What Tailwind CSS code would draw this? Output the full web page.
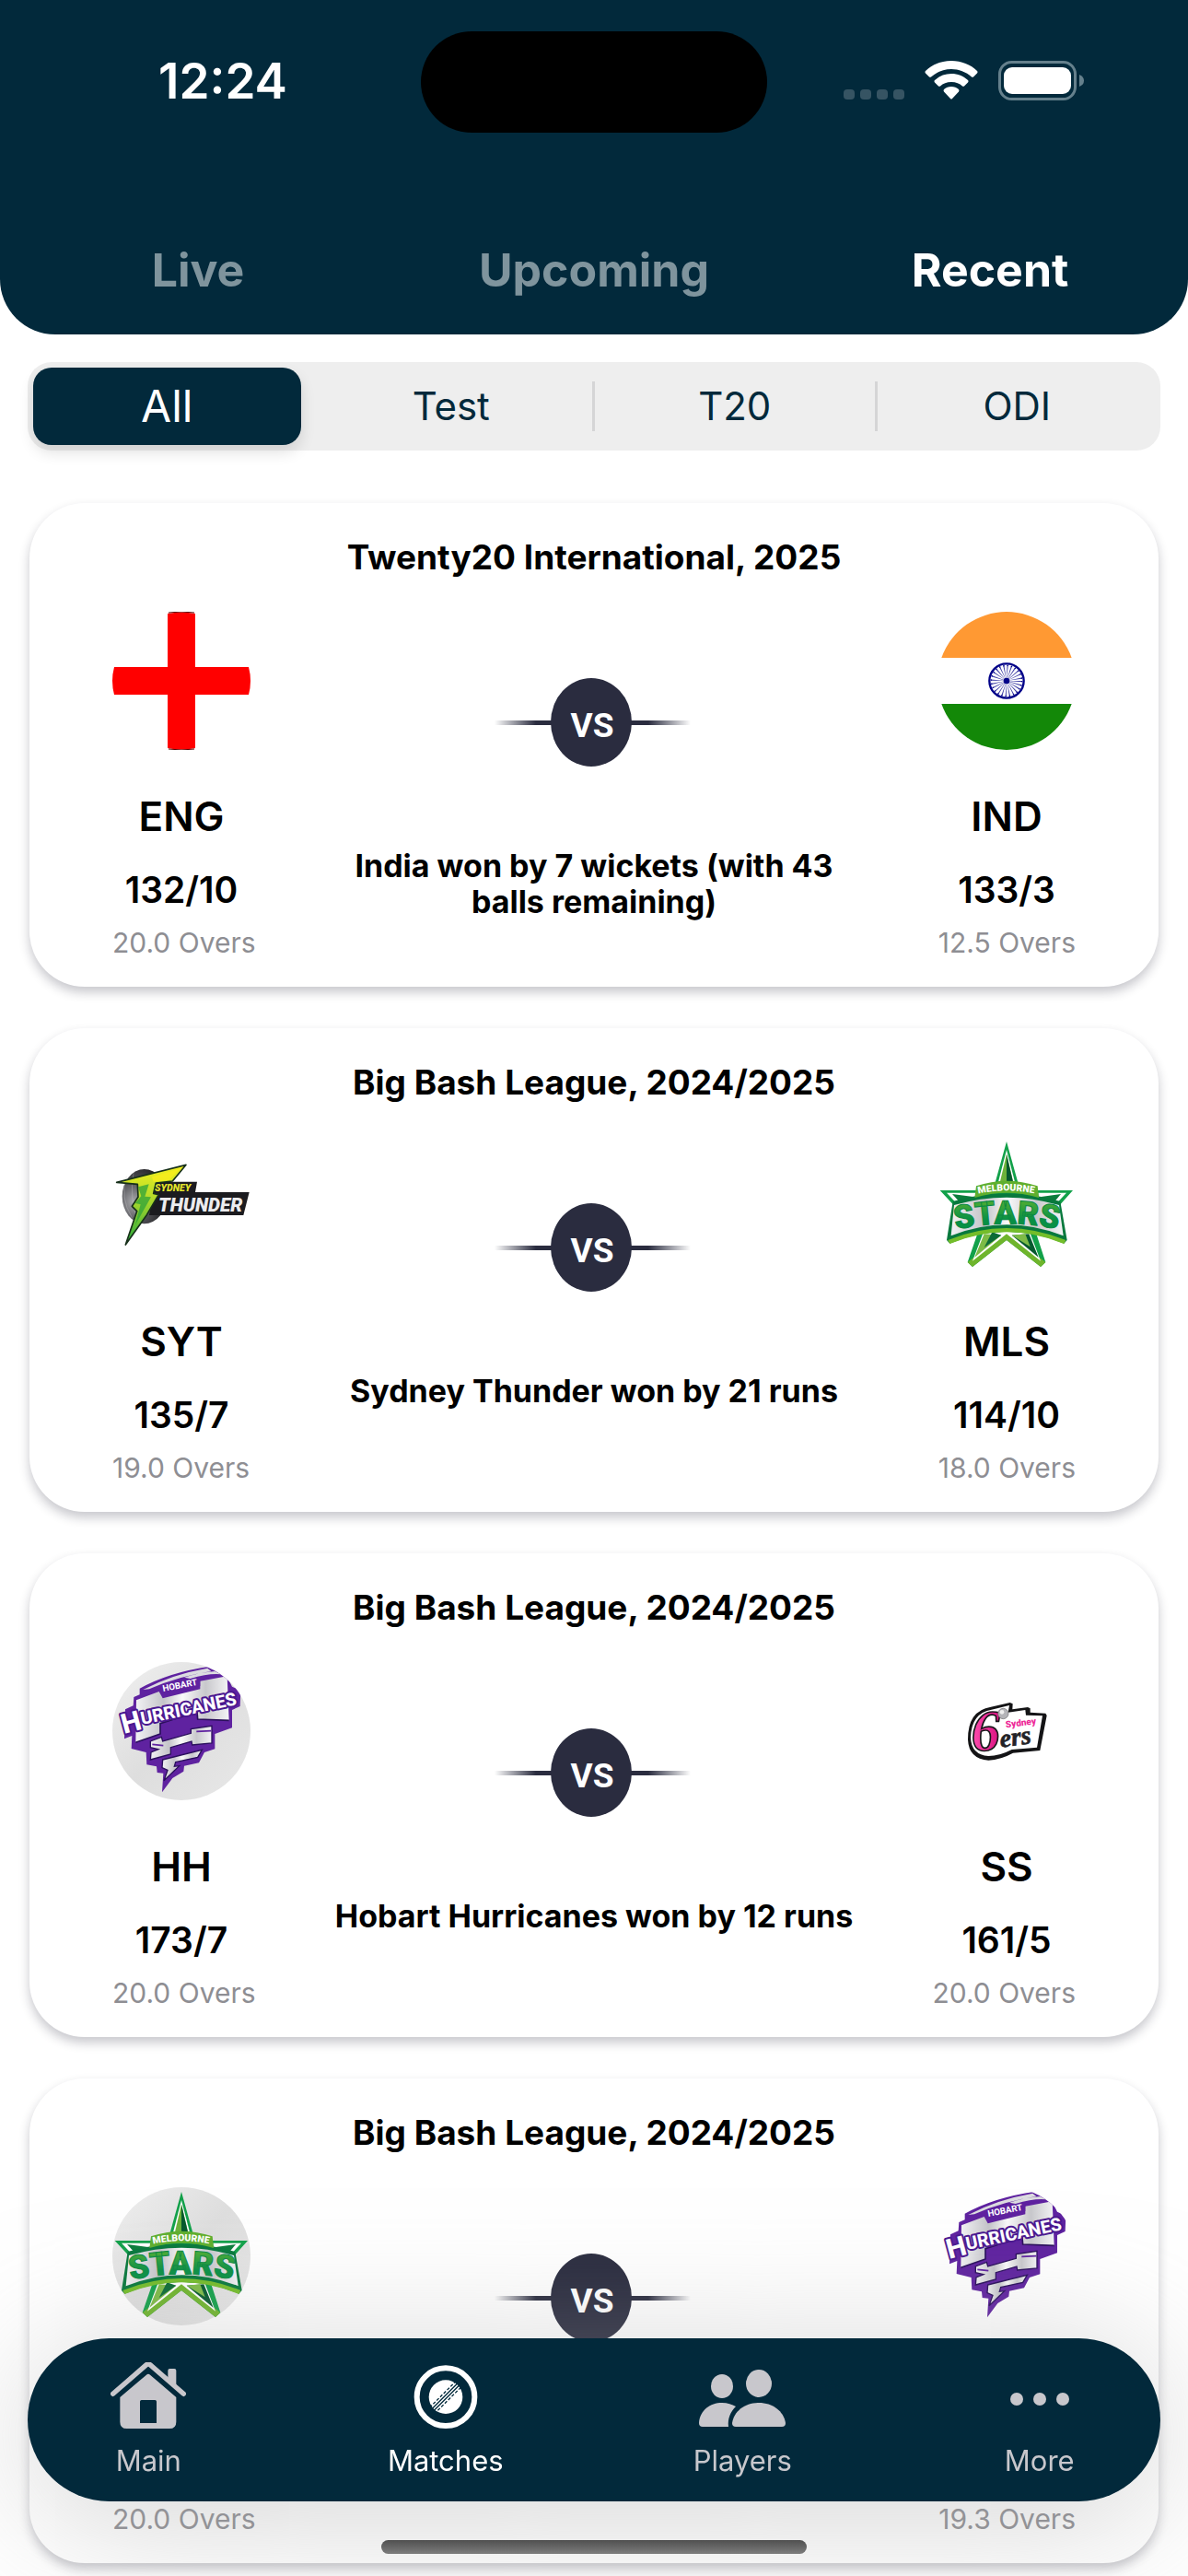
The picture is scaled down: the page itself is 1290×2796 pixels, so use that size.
<!DOCTYPE html>
<html lang="en">
<head>
<meta charset="utf-8">
<meta name="viewport" content="width=device-width, initial-scale=1">
<title>Matches</title>
<script src="https://cdn.jsdelivr.net/npm/@tailwindcss/browser@4"></script>
</head>
<body class="min-h-screen bg-white font-['Inter','Roboto',sans-serif] text-black">

<!-- Shared gradients and paths -->
<svg class="absolute size-0" aria-hidden="true">
  <defs>
    <linearGradient id="fadeL"><stop offset="0" stop-color="#2a2c3f" stop-opacity="0"/><stop offset=".7" stop-color="#2a2c3f"/></linearGradient>
    <linearGradient id="fadeR"><stop offset=".3" stop-color="#2a2c3f"/><stop offset="1" stop-color="#2a2c3f" stop-opacity="0"/></linearGradient>
    <linearGradient id="plate" x1="0" y1="0" x2="1" y2="1"><stop offset="0" stop-color="#f0f0f0"/><stop offset=".5" stop-color="#dedede"/><stop offset="1" stop-color="#e8e8e8"/></linearGradient>
    <linearGradient id="silver"><stop offset="0" stop-color="#f2f2f4"/><stop offset=".3" stop-color="#c4c4c9"/><stop offset=".5" stop-color="#fafafa"/><stop offset=".75" stop-color="#c8c8cc"/><stop offset="1" stop-color="#f4f4f6"/></linearGradient>
    <linearGradient id="green" x1="0" y1="0" x2="0" y2="1"><stop offset="0" stop-color="#6cb82c"/><stop offset=".6" stop-color="#089045"/></linearGradient>
    <linearGradient id="bolt" x1="0" y1="0" x2="0" y2="1"><stop offset="0" stop-color="#f4f01e"/><stop offset=".4" stop-color="#b5dc2a"/><stop offset="1" stop-color="#22a83c"/></linearGradient>
    <radialGradient id="ball" cx=".25" cy=".6" r=".8"><stop offset="0" stop-color="#a8a8ac"/><stop offset=".45" stop-color="#55555a"/><stop offset="1" stop-color="#18181b"/></radialGradient>
    <linearGradient id="pink" x1="0" y1="0" x2="1" y2="0"><stop offset="0" stop-color="#ff4fb0"/><stop offset="1" stop-color="#d8107f"/></linearGradient>
    <clipPath id="hurClip"><circle cx="291" cy="297" r="225"/></clipPath>
    <path id="starsArc" d="M114 344Q279 306 450 344"/>
    <path id="melbArc" d="M187 227Q279 207 374 227"/>
  </defs>
</svg>

<header class="rounded-b-[60px] bg-[#02293b]">
  <div class="relative flex h-[174px] justify-between px-[112px] pt-[62px] text-white">
    <time class="w-[260px] text-center text-[53px] leading-[52px] font-semibold">12:24</time>
    <div class="absolute top-[34px] left-1/2 h-[110px] w-[376px] -translate-x-1/2 rounded-full bg-black"></div>
    <div class="flex h-[50px] items-center gap-[22px]">
      <svg class="h-[44px] w-[66px]" viewBox="0 0 66 44" fill="#365463" aria-label="No signal" role="img"><rect y="32" width="12" height="11" rx="4"/><rect x="18" y="32" width="12" height="11" rx="4"/><rect x="36" y="32" width="12" height="11" rx="4"/><rect x="54" y="32" width="12" height="11" rx="4"/></svg>
      <svg class="h-[42px] w-[58px]" viewBox="0 0 58 42" fill="#fff" aria-label="Wi-Fi" role="img">
        <path d="M29 0C40 0 50 4 57 11Q58 12 57 13.500L53 17.500Q52 18 51 17.500C45 12 37 9 29 9S13 12 7 17.500Q6 18 5 17.500L1 13.500Q0 12 1 11C8 4 18 0 29 0Z"/>
        <path d="M29 14C36 14 42 16.500 47 21Q48 22 47 23.500L43 27.500Q42 28 41 27.500C38 24.500 34 23 29 23S20 24.500 17 27.500Q16 28 15 27.500L11 23.500Q10 22 11 21C16 16.500 22 14 29 14Z"/>
        <path d="M29 28C32 28 35 29 37 31Q38 32 37 33.500L30 41Q29 42 28 41L21 33.500Q20 32 21 31C23 29 26 28 29 28Z"/>
      </svg>
      <svg class="h-[43px] w-[94px]" viewBox="0 0 94 43" aria-label="Battery full" role="img"><rect x="1.500" y="1.500" width="82" height="40" rx="13" fill="none" stroke="#65808c" stroke-width="3"/><rect x="6" y="7" width="73" height="29" rx="9" fill="#fff"/><path d="M88 15Q93 17 93 21.500T88 28Z" fill="#65808c"/></svg>
    </div>
  </div>
  <nav class="grid grid-cols-3 pt-[85px] pb-[36px] text-[50px] leading-[68px] font-bold text-[#7f949d]" aria-label="Match lists">
    <button type="button">Live</button>
    <button type="button">Upcoming</button>
    <button type="button" class="text-white" aria-current="page">Recent</button>
  </nav>
</header>

<main class="px-[30px] pt-[30px] pb-[12px]">
  <div class="grid h-24 grid-cols-4 items-center rounded-[26px] bg-[#eee] pr-1 text-[42px] leading-[54px] text-[#02293b]" role="group" aria-label="Format">
    <button type="button" aria-pressed="true" class="mr-[10px] ml-[6px] h-[84px] rounded-[20px] bg-[#02293b] text-[48px] text-white shadow-[0_8px_16px_rgba(0,0,0,0.12)]">All</button>
    <button type="button">Test</button>
    <button type="button" class="border-l-3 border-[#d5d5d6]">T20</button>
    <button type="button" class="border-l-3 border-[#d5d5d6]">ODI</button>
  </div>

  <div class="mx-[2px] mt-[57px] flex flex-col gap-[45px]">

    <article class="rounded-[60px] bg-white px-[90px] pt-[37px] pb-[30px] shadow-[0_6px_12px_rgba(20,20,40,0.24)]">
      <h2 class="text-center text-[37px] leading-[44px] font-bold">Twenty20 International, 2025</h2>
      <div class="mt-[37px] flex justify-between">
        <div class="flex w-[150px] flex-col">
          <svg class="size-[150px]" viewBox="0 0 150 150" role="img" aria-label="England">
            <path d="M60 2Q75-1 90 2V60H148Q152 75 148 90H90V148Q75 151 60 148V90H2Q-2 75 2 60H60Z" fill="#f00"/>
            <path d="M61 1Q75-1 89 1M61 149Q75 151 89 149" fill="none" stroke="#500" stroke-width="1"/>
          </svg>
          <h3 class="mt-[46px] text-center text-[44px] leading-[52px] font-semibold">ENG</h3>
          <p class="mt-8 text-center text-[39px] leading-[44px] font-semibold">132/10</p>
          <p class="mt-[17px] self-start text-[30px] leading-[36px] whitespace-nowrap text-[#8e8e93]">20.0 Overs</p>
        </div>
        <div class="flex max-w-[600px] flex-1 flex-col items-center pt-[72px]">
          <svg class="h-24 w-[216px]" viewBox="0 0 216 96" role="img" aria-label="versus">
            <g id="vs">
              <rect x="0" y="46" width="64" height="5" fill="url(#fadeL)"/>
              <rect x="147" y="46" width="66" height="5" fill="url(#fadeR)"/>
              <ellipse cx="105" cy="48" rx="44" ry="48" fill="#2a2c3f"/>
              <text x="106" y="64" text-anchor="middle" font-family="Roboto, sans-serif" font-weight="700" font-size="37" fill="#fff">VS</text>
            </g>
          </svg>
          <p class="mt-[88px] max-w-[570px] text-center text-[34px] leading-[39px] font-bold">India won by 7 wickets (with 43 balls remaining)</p>
        </div>
        <div class="flex w-[150px] flex-col">
          <svg class="size-[150px]" viewBox="54 72 450 450" role="img" aria-label="India">
            <path d="M67 222A225 225 0 0 1 491 222Z" fill="#ff9933"/>
            <path d="M67 372A225 225 0 0 0 491 372Z" fill="#138808"/>
            <circle cx="279" cy="297" r="56" fill="#fff" stroke="#000088" stroke-width="7"/>
            <circle cx="279" cy="297" r="50" fill="none" stroke="#000088" stroke-width="4" stroke-dasharray="4 9.1"/>
            <circle cx="279" cy="297" r="27" fill="none" stroke="#000088" stroke-width="46" stroke-opacity=".75" stroke-dasharray="2 5.07"/>
            <circle cx="279" cy="297" r="10" fill="#000088"/>
          </svg>
          <h3 class="mt-[46px] text-center text-[44px] leading-[52px] font-semibold">IND</h3>
          <p class="mt-8 text-center text-[39px] leading-[44px] font-semibold">133/3</p>
          <p class="mt-[17px] self-end text-[30px] leading-[36px] whitespace-nowrap text-[#8e8e93]">12.5 Overs</p>
        </div>
      </div>
    </article>

    <article class="rounded-[60px] bg-white px-[90px] pt-[37px] pb-[30px] shadow-[0_6px_12px_rgba(20,20,40,0.24)]">
      <h2 class="text-center text-[37px] leading-[44px] font-bold">Big Bash League, 2024/2025</h2>
      <div class="mt-[37px] flex justify-between">
        <div class="flex w-[150px] flex-col">
          <svg class="size-[150px]" viewBox="66 42 450 450" role="img" aria-label="Sydney Thunder">
            <ellipse cx="170" cy="236" rx="72" ry="89" fill="url(#ball)"/>
            <path d="M112 170Q90 240 130 305M135 160Q120 240 150 318" fill="none" stroke="#c9c9cc" stroke-width="2" stroke-opacity=".5"/>
            <path d="M262 188H342L336 222H512L493 297H186L206 190Z" fill="#1b1b1f"/>
            <path d="M80 190L306 133L262 186L208 192L200 226L217 230L178 296L109 393L146 284L130 268L150 238L148 196Z" fill="url(#bolt)" stroke="#17301a" stroke-width="5" stroke-linejoin="round"/>
            <path d="M150 205L185 196L172 236L192 238L140 330L158 262L140 258L160 235Z" fill="#2da23a" opacity=".75"/>
            <path d="M195 172L285 146L252 182L200 188Z" fill="#f7ee1b" opacity=".8"/>
            <text x="204" y="219" font-family="Roboto, sans-serif" font-weight="900" font-style="italic" font-size="32" fill="#e2e32b">SYDNEY</text>
            <text x="216" y="284" font-family="Roboto, sans-serif" font-weight="900" font-style="italic" font-size="62" fill="#ececee">THUNDER</text>
          </svg>
          <h3 class="mt-[46px] text-center text-[44px] leading-[52px] font-semibold">SYT</h3>
          <p class="mt-8 text-center text-[39px] leading-[44px] font-semibold">135/7</p>
          <p class="mt-[17px] self-start text-[30px] leading-[36px] whitespace-nowrap text-[#8e8e93]">19.0 Overs</p>
        </div>
        <div class="flex max-w-[600px] flex-1 flex-col items-center pt-[72px]">
          <svg class="h-24 w-[216px]" viewBox="0 0 216 96" role="img" aria-label="versus"><use href="#vs"/></svg>
          <p class="mt-[88px] max-w-[570px] text-center text-[34px] leading-[39px] font-bold">Sydney Thunder won by 21 runs</p>
        </div>
        <div class="flex w-[150px] flex-col">
          <svg class="size-[150px]" viewBox="54 42 450 450" role="img" aria-label="Melbourne Stars">
            <g id="stars">
              <path d="M279 57L320 205L372 216H495L420 300L374 352L406 450L390 465L279 378L168 465L152 450L186 352L140 300L62 216H186L238 205Z" fill="#12a14a"/>
              <path d="M168 465L279 378L390 465L406 450L279 352L152 450Z" fill="#6fb52c"/>
              <path d="M279 84L309 200H249Z" fill="#fff"/>
              <path d="M279 98L303 200H255Z" fill="#6cb23a"/>
              <path d="M279 98L303 200H279Z" fill="#06592e"/>
              <path d="M84 224H180L176 240L110 252Z" fill="#fff"/><path d="M102 228L176 238L124 252Z" fill="#0b7d3c"/>
              <path d="M474 224H382L384 240L448 252Z" fill="#fff"/><path d="M456 228L386 238L436 252Z" fill="#0b7d3c"/>
              <path d="M202 356L279 350L356 356L390 446L279 358L168 446Z" fill="#fff"/>
              <path d="M206 358L262 362L175 434Z" fill="#7dbb46"/><path d="M262 362L232 352L206 402Z" fill="#0b6b37"/>
              <path d="M352 358L296 362L383 434Z" fill="#06592e"/><path d="M296 362L340 358L356 400Z" fill="#7dbb46"/>
              <path d="M104 252Q279 200 454 252L476 378L466 389Q279 312 94 389L84 378Z" fill="#08793d"/>
              <path d="M88 378Q279 300 472 378L466 390Q279 314 94 390Z" fill="#74bd2a"/>
              <path d="M108 264Q279 214 450 264L464 364Q279 292 98 364Z" fill="url(#silver)"/>
              <path d="M180 202Q279 168 380 202L384 240Q279 208 175 240Z" fill="#5faf2e"/>
              <text font-family="Roboto, sans-serif" font-weight="900" font-size="31" fill="#fff"><textPath href="#melbArc">MELBOURNE</textPath></text>
              <text font-family="Roboto, sans-serif" font-weight="900" font-size="106" fill="url(#green)" stroke="#0a8a42" stroke-width="3"><textPath href="#starsArc">STARS</textPath></text>
            </g>
          </svg>
          <h3 class="mt-[46px] text-center text-[44px] leading-[52px] font-semibold">MLS</h3>
          <p class="mt-8 text-center text-[39px] leading-[44px] font-semibold">114/10</p>
          <p class="mt-[17px] self-end text-[30px] leading-[36px] whitespace-nowrap text-[#8e8e93]">18.0 Overs</p>
        </div>
      </div>
    </article>

    <article class="rounded-[60px] bg-white px-[90px] pt-[37px] pb-[30px] shadow-[0_6px_12px_rgba(20,20,40,0.24)]">
      <h2 class="text-center text-[37px] leading-[44px] font-bold">Big Bash League, 2024/2025</h2>
      <div class="mt-[37px] flex justify-between">
        <div class="flex w-[150px] flex-col">
          <svg class="size-[150px]" viewBox="66 72 450 450" role="img" aria-label="Hobart Hurricanes">
            <circle cx="291" cy="297" r="225" fill="url(#plate)"/>
            <g id="hurricanes" clip-path="url(#hurClip)">
              <path d="M155 158Q250 105 385 86L440 120L456 152L484 165L482 216L456 228V286L400 306V355L366 366L348 400L300 410L298 428L262 450L228 496L232 434L212 432L210 412L178 406L176 366L128 354L130 312L105 322L108 226L134 214L136 186L155 178Z" fill="#5f22a0"/>
              <path d="M166 162Q260 112 376 92L388 102Q280 118 186 160ZM300 122Q350 106 400 102L420 112Q380 108 320 126Z" fill="#dcdce0"/>
              <path d="M144 196L218 168L230 190L352 160V134L440 118L446 262L344 258L342 232L222 272V306L142 334Z" fill="url(#silver)"/>
              <path d="M142 334L222 306V272L342 234L344 258L446 262" fill="none" stroke="#2a0f5c" stroke-width="5"/>
              <path d="M190 330L226 316L230 330L322 304V290L390 280V336L326 342L324 330L256 350V372L190 390L192 366L216 356L190 350Z" fill="url(#silver)" stroke="#2a0f5c" stroke-width="4"/>
              <path d="M196 340L232 344M388 296L340 298" stroke="#5f22a0" stroke-width="5"/>
              <path d="M230 390L358 358L344 382L272 398L268 412L284 410L234 458L246 424L228 416Z" fill="url(#silver)" stroke="#2a0f5c" stroke-width="4"/>
              <path d="M222 150L352 122V150L226 178Z" fill="#5f22a0"/>
              <g font-family="Roboto, sans-serif" font-weight="800" fill="#fff" stroke="#4a1790" stroke-width="12" stroke-linejoin="round" paint-order="stroke">
                <text font-size="29" font-weight="700" stroke-width="0" transform="translate(232 168) rotate(-11)">HOBART</text>
                <text font-size="90" transform="translate(104 306) rotate(-15)">H</text>
                <text font-size="58" transform="translate(163 276) rotate(-12)">URRICANES</text>
              </g>
            </g>
          </svg>
          <h3 class="mt-[46px] text-center text-[44px] leading-[52px] font-semibold">HH</h3>
          <p class="mt-8 text-center text-[39px] leading-[44px] font-semibold">173/7</p>
          <p class="mt-[17px] self-start text-[30px] leading-[36px] whitespace-nowrap text-[#8e8e93]">20.0 Overs</p>
        </div>
        <div class="flex max-w-[600px] flex-1 flex-col items-center pt-[72px]">
          <svg class="h-24 w-[216px]" viewBox="0 0 216 96" role="img" aria-label="versus"><use href="#vs"/></svg>
          <p class="mt-[88px] max-w-[570px] text-center text-[34px] leading-[39px] font-bold">Hobart Hurricanes won by 12 runs</p>
        </div>
        <div class="flex w-[150px] flex-col">
          <svg class="size-[150px]" viewBox="-6 -48 450 450" role="img" aria-label="Sydney Sixers">
            <path d="M93 205Q92 110 168 98L230 84L239 88L238 106L288 99L296 103V116L346 119L350 126L328 240L240 248Q200 270 160 272Q96 268 93 205Z" fill="#141416"/>
            <path d="M102 198Q104 118 170 107L228 93L224 116L280 108L282 125L336 127L318 230L236 237Q196 258 160 258Q104 254 102 198Z" fill="#fff"/>
            <text x="104" y="240" font-family="Liberation Serif, serif" font-weight="700" font-style="italic" font-size="188" fill="url(#pink)" stroke="#17171a" stroke-width="5">6</text>
            <circle cx="208" cy="120" r="17" fill="#b4b4b8" stroke="#6d6d70" stroke-width="2"/><circle cx="204" cy="115" r="7" fill="#eee"/>
            <text font-family="Roboto, sans-serif" font-weight="900" font-size="30" fill="#ee2a98" transform="translate(217 166) rotate(-7)">Sydney</text>
            <text font-family="Liberation Serif, serif" font-weight="700" font-style="italic" font-size="84" fill="#222226" stroke="#222226" stroke-width="2" transform="translate(200 230) rotate(-8)">ers</text>
          </svg>
          <h3 class="mt-[46px] text-center text-[44px] leading-[52px] font-semibold">SS</h3>
          <p class="mt-8 text-center text-[39px] leading-[44px] font-semibold">161/5</p>
          <p class="mt-[17px] self-end text-[30px] leading-[36px] whitespace-nowrap text-[#8e8e93]">20.0 Overs</p>
        </div>
      </div>
    </article>

    <article class="rounded-[60px] bg-white px-[90px] pt-[37px] pb-[30px] shadow-[0_6px_12px_rgba(20,20,40,0.24)]">
      <h2 class="text-center text-[37px] leading-[44px] font-bold">Big Bash League, 2024/2025</h2>
      <div class="mt-[37px] flex h-[378px] justify-between">
        <div class="flex w-[150px] flex-col justify-between">
          <svg class="size-[150px]" viewBox="54 42 450 450" role="img" aria-label="Melbourne Stars"><circle cx="279" cy="267" r="225" fill="url(#plate)"/><use href="#stars"/></svg>
          <p class="self-start text-[30px] leading-[36px] whitespace-nowrap text-[#8e8e93]">20.0 Overs</p>
        </div>
        <div class="flex flex-1 flex-col items-center pt-[72px]">
          <svg class="h-24 w-[216px]" viewBox="0 0 216 96" role="img" aria-label="versus"><use href="#vs"/></svg>
        </div>
        <div class="flex w-[150px] flex-col justify-between">
          <svg class="size-[150px]" viewBox="66 72 450 450" role="img" aria-label="Hobart Hurricanes"><use href="#hurricanes"/></svg>
          <p class="self-end text-[30px] leading-[36px] whitespace-nowrap text-[#8e8e93]">19.3 Overs</p>
        </div>
      </div>
    </article>
  </div>
</main>

<footer class="fixed inset-x-0 bottom-0 flex flex-col items-center px-[30px] pb-[24px]">
  <nav class="h-[177px] w-full rounded-full bg-[#02293b] shadow-[0_16px_150px_rgba(165,165,165,0.5)]" aria-label="Main">
    <ul class="-mx-[30px] grid grid-cols-4 pt-[26px] text-[31px] leading-[36px] text-[#c7c7cc]">
      <li><a href="#main" class="flex flex-col items-center gap-[17px]">
        <svg class="h-[72px] w-[82px]" viewBox="119 72 246 216" fill="#c8c7cc" aria-hidden="true">
          <path d="M127 175L236 80Q242 76 248 80L357 175" fill="none" stroke="#c8c7cc" stroke-width="16" stroke-linecap="round"/>
          <path d="M306 128V99Q306 93 312 93H327Q333 93 333 99V150Z"/>
          <path fill-rule="evenodd" d="M236 113Q242 108 248 113L333 186V266Q333 288 311 288H172Q150 288 150 266V186ZM220 195Q215 195 215 200V270H269V200Q269 195 264 195Z"/>
        </svg>Main</a></li>
      <li><a href="#matches" aria-current="page" class="flex flex-col items-center gap-[17px] text-white">
        <svg class="h-[72px] w-[72px]" viewBox="1104 76 216 216" aria-hidden="true">
          <circle cx="1212" cy="189" r="94" fill="none" stroke="#fff" stroke-width="18"/>
          <circle cx="1212" cy="189" r="55" fill="#fff"/>
          <g stroke="#02293b" stroke-width="4"><path d="M1160 223L1241 142M1175 244L1262 157" stroke-dasharray="10 6"/><path d="M1163 232L1250 145M1168 239L1256 151"/></g>
        </svg>Matches</a></li>
      <li><a href="#players" class="flex flex-col items-center gap-[17px]">
        <svg class="h-[72px] w-[94px]" viewBox="0 0 94 72" fill="#c8c7cc" aria-hidden="true">
          <ellipse cx="25" cy="26" rx="12" ry="13"/><ellipse cx="65" cy="23" rx="14" ry="15"/>
          <path d="M4 70Q0 70 0 66C1 52 12 44 25 44C31 44 36 46 40 48C34 54 31 61 32 70Z"/>
          <path d="M40 70Q36 70 36 66C38 53 50 44 65 44S92 53 94 66Q94 70 90 70Z"/>
        </svg>Players</a></li>
      <li><a href="#more" class="flex flex-col items-center gap-[17px]">
        <svg class="h-[72px] w-[64px]" viewBox="0 0 64 72" fill="#c8c7cc" aria-hidden="true"><circle cx="7" cy="40" r="7"/><circle cx="32" cy="40" r="7"/><circle cx="57" cy="40" r="7"/></svg>More</a></li>
    </ul>
  </nav>
  <div class="mt-[42px] h-[15px] w-[462px] rounded-full bg-linear-to-b from-[#505050] to-[#7d7d7d]"></div>
</footer>
</body>
</html>
